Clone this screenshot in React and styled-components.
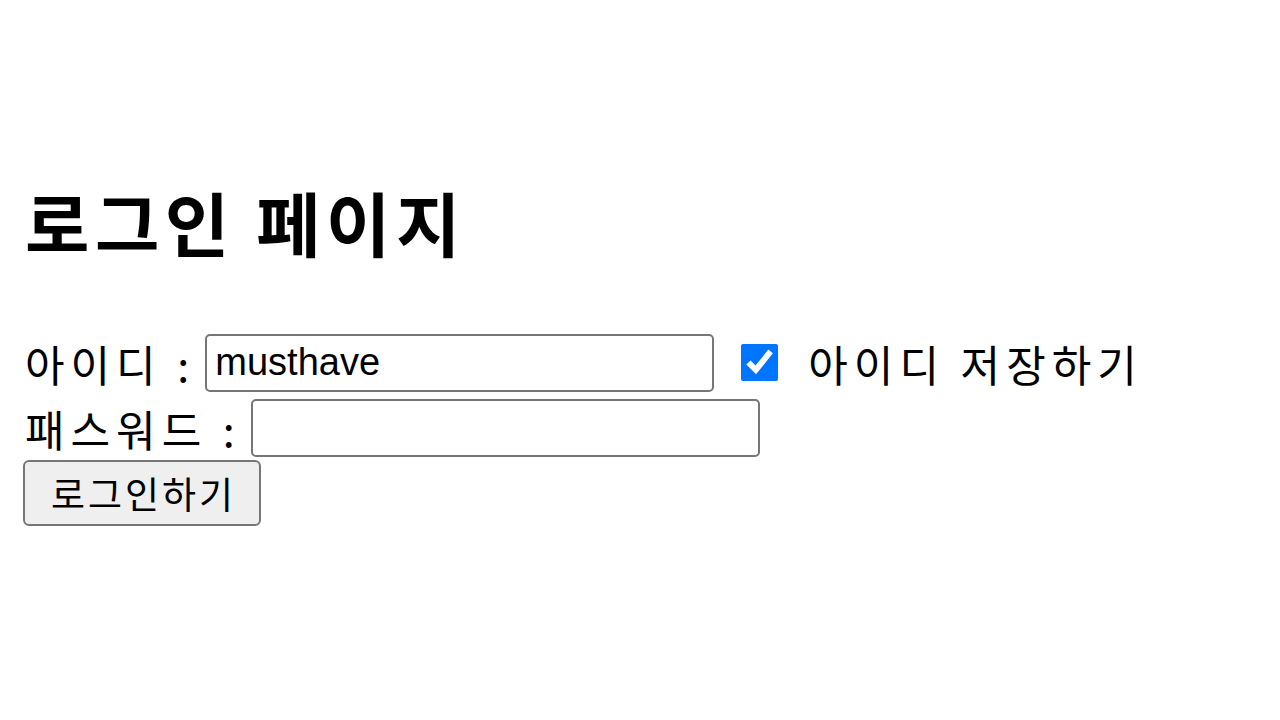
import React from "react";
import styled, { createGlobalStyle } from "styled-components";

const GlobalStyle = createGlobalStyle`
  body {
    margin: 0;
    background: #fff;
    color: #000;
    font-family: "Noto Sans CJK KR", "Liberation Sans", sans-serif;
  }
`;

const Page = styled.div`
  padding: 180px 0 0 25px;
`;

const Title = styled.h2`
  margin: 0 0 66px;
  font-size: 70px;
  line-height: 84px;
  font-weight: 700;
  letter-spacing: 5.5px;
`;

const Form = styled.form`
  display: flex;
  flex-direction: column;
  align-items: flex-start;
`;

const Row = styled.div`
  display: flex;
  align-items: center;
  height: ${(p) => p.$h || 66}px;
  font-size: 43px;
  letter-spacing: 6px;
`;

const Label = styled.span`
  margin-right: 10px;
  white-space: pre;
`;

const TextInput = styled.input`
  box-sizing: border-box;
  width: ${(p) => p.$w || 509}px;
  height: 58px;
  border: 2px solid #767676;
  border-radius: 5px;
  padding: 0 8px;
  font-family: "Liberation Sans", Arial, sans-serif;
  font-size: 38px;
  letter-spacing: 0;
  color: #000;
  outline: none;
`;

const Check = styled.input`
  width: 37px;
  height: 37px;
  margin: 0 30px 0 27px;
  accent-color: #0075ff;
`;

const Button = styled.button`
  margin: -1px 0 0 -2px;
  box-sizing: border-box;
  width: 238px;
  height: 66px;
  background: #efefef;
  border: 2px solid #767676;
  border-radius: 6px;
  font-family: "Noto Sans CJK KR", sans-serif;
  font-size: 37px;
  letter-spacing: 3px;
  color: #000;
  padding: 0 0 0 3px;
`;

export default function App() {
  return (
    <>
      <GlobalStyle />
      <Page>
        <Title>로그인 페이지</Title>
        <Form onSubmit={(e) => e.preventDefault()}>
          <Row $h={65}>
            <Label>아이디 :</Label>
            <TextInput type="text" defaultValue="musthave" />
            <Check type="checkbox" defaultChecked />
            <span>아이디 저장하기</span>
          </Row>
          <Row>
            <Label>패스워드 :</Label>
            <TextInput type="password" />
          </Row>
          <Button type="submit">로그인하기</Button>
        </Form>
      </Page>
    </>
  );
}
